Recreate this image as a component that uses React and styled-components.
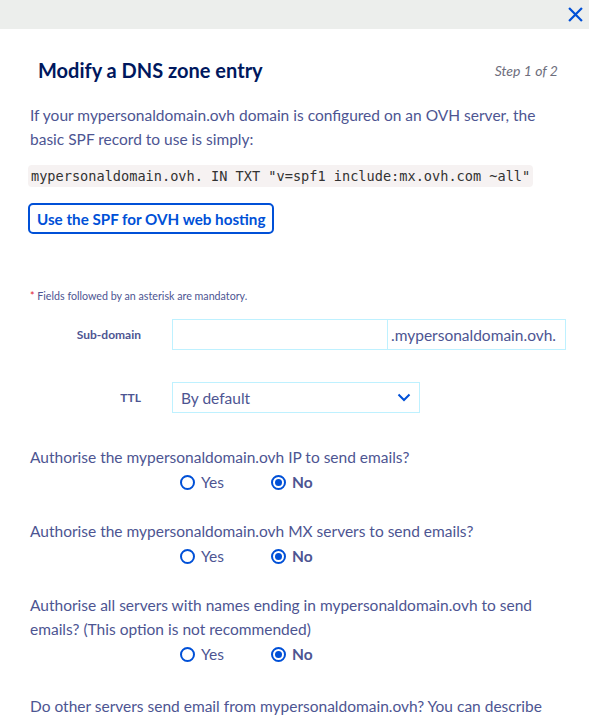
import React from "react";
import styled, { createGlobalStyle } from "styled-components";

const GlobalStyle = createGlobalStyle`
  body {
    margin: 0;
    background: #ffffff;
    font-family: Lato, "Open Sans", sans-serif;
    color: #4d5592;
  }
  * { box-sizing: border-box; }
`;

const TopBar = styled.div`
  height: 29px;
  background: #eceeec;
  display: flex;
  justify-content: flex-end;
  align-items: center;
  padding-right: 3px;
`;

const CloseButton = styled.button`
  border: 0;
  background: none;
  padding: 0;
  width: 22px;
  height: 22px;
  display: flex;
  align-items: center;
  justify-content: center;
  cursor: pointer;
`;

const Body = styled.div`
  padding: 0 23px 0 30px;
`;

const Header = styled.div`
  display: flex;
  justify-content: space-between;
  align-items: center;
  padding: 8px 8px 0 8px;
  height: 74px;
`;

const Title = styled.h1`
  margin: 0;
  font-size: 20px;
  font-weight: 700;
  color: #00185e;
`;

const StepText = styled.span`
  font-style: italic;
  font-size: 14px;
  color: #6e6e7d;
`;

const Intro = styled.p`
  margin: 0;
  font-size: 15.5px;
  line-height: 24px;
`;

const Code = styled.code`
  display: block;
  width: fit-content;
  margin: 14px 0 0 -2px;
  padding: 2px 3px;
  background: #f6f2f2;
  border-radius: 4px;
  font-family: "DejaVu Sans Mono", monospace;
  font-size: 13.6px;
  line-height: 18px;
  color: #333333;
`;

const OutlineButton = styled.button`
  display: block;
  margin: 16px 0 0 -2px;
  height: 31px;
  padding: 0 7px;
  border: 2px solid #0050d7;
  border-radius: 5px;
  background: #ffffff;
  color: #0050d7;
  font-family: inherit;
  font-size: 15.2px;
  font-weight: 700;
`;

const Mandatory = styled.p`
  margin: 55px 0 0 0;
  font-size: 10.7px;
  line-height: 14px;
`;

const Star = styled.span`
  color: #e0202d;
`;

const FormGrid = styled.div`
  display: grid;
  grid-template-columns: 111px auto;
  column-gap: 31px;
  row-gap: 32px;
  align-items: center;
  margin-top: 16px;
`;

const Label = styled.label`
  text-align: right;
  font-size: 12px;
  font-weight: 700;
  color: #4d5592;
`;

const InputGroup = styled.div`
  display: flex;
  width: 394px;
  height: 31px;
  border: 1px solid #bef1ff;
`;

const TextInput = styled.input`
  width: 214px;
  border: 0;
  outline: none;
  padding: 0 8px;
  font-family: inherit;
`;

const Addon = styled.span`
  flex: 1;
  display: flex;
  align-items: center;
  padding-left: 3px;
  border-left: 1px solid #bef1ff;
  font-size: 15.5px;
  color: #4d5592;
`;

const Select = styled.div`
  width: 248px;
  height: 31px;
  border: 1px solid #bef1ff;
  display: flex;
  align-items: center;
  justify-content: space-between;
  padding: 0 8px 0 8px;
  font-size: 15.5px;
`;

const Question = styled.div`
  margin-top: ${(p) => p.$gap}px;
  font-size: 15.5px;
  line-height: 24px;
`;

const RadioRow = styled.div`
  display: flex;
  padding-left: 150px;
  height: 26px;
  align-items: center;
`;

const RadioOption = styled.label`
  display: flex;
  align-items: center;
  gap: 6px;
  width: 91px;
  font-size: 15.5px;
  font-weight: ${(p) => (p.$checked ? 700 : 400)};
`;

const RadioDot = styled.span`
  width: 15px;
  height: 15px;
  border-radius: 50%;
  border: 2px solid #0050d7;
  display: flex;
  align-items: center;
  justify-content: center;
  &::after {
    content: "";
    width: 7px;
    height: 7px;
    border-radius: 50%;
    background: ${(p) => (p.$checked ? "#0050d7" : "transparent")};
  }
`;

const questions = [
  { text: "Authorise the mypersonaldomain.ovh IP to send emails?", gap: 32 },
  { text: "Authorise the mypersonaldomain.ovh MX servers to send emails?", gap: 24 },
  {
    text: "Authorise all servers with names ending in mypersonaldomain.ovh to send emails? (This option is not recommended)",
    gap: 24,
  },
];

const Radios = () => (
  <RadioRow>
    <RadioOption>
      <RadioDot />
      Yes
    </RadioOption>
    <RadioOption $checked>
      <RadioDot $checked />
      No
    </RadioOption>
  </RadioRow>
);

export default function App() {
  return (
    <>
      <GlobalStyle />
      <TopBar>
        <CloseButton aria-label="close">
          <svg width="15" height="15" viewBox="0 0 14 14">
            <path d="M1 1 L13 13 M13 1 L1 13" stroke="#0050d7" strokeWidth="2.1" />
          </svg>
        </CloseButton>
      </TopBar>
      <Body>
        <Header>
          <Title>Modify a DNS zone entry</Title>
          <StepText>Step 1 of 2</StepText>
        </Header>
        <Intro>
          If your mypersonaldomain.ovh domain is configured on an OVH server, the basic SPF
          record to use is simply:
        </Intro>
        <Code>mypersonaldomain.ovh. IN TXT "v=spf1 include:mx.ovh.com ~all"</Code>
        <OutlineButton>Use the SPF for OVH web hosting</OutlineButton>
        <Mandatory>
          <Star>*</Star> Fields followed by an asterisk are mandatory.
        </Mandatory>
        <FormGrid>
          <Label>Sub-domain</Label>
          <InputGroup>
            <TextInput />
            <Addon>.mypersonaldomain.ovh.</Addon>
          </InputGroup>
          <Label>TTL</Label>
          <Select>
            By default
            <svg width="14" height="9" viewBox="0 0 14 9">
              <path d="M1.5 1.5 L7 7 L12.5 1.5" fill="none" stroke="#0050d7" strokeWidth="2" />
            </svg>
          </Select>
        </FormGrid>
        {questions.map((q) => (
          <div key={q.text}>
            <Question $gap={q.gap}>{q.text}</Question>
            <Radios />
          </div>
        ))}
        <Question $gap={27}>
          Do other servers send email from mypersonaldomain.ovh? You can describe them below.
        </Question>
      </Body>
    </>
  );
}
